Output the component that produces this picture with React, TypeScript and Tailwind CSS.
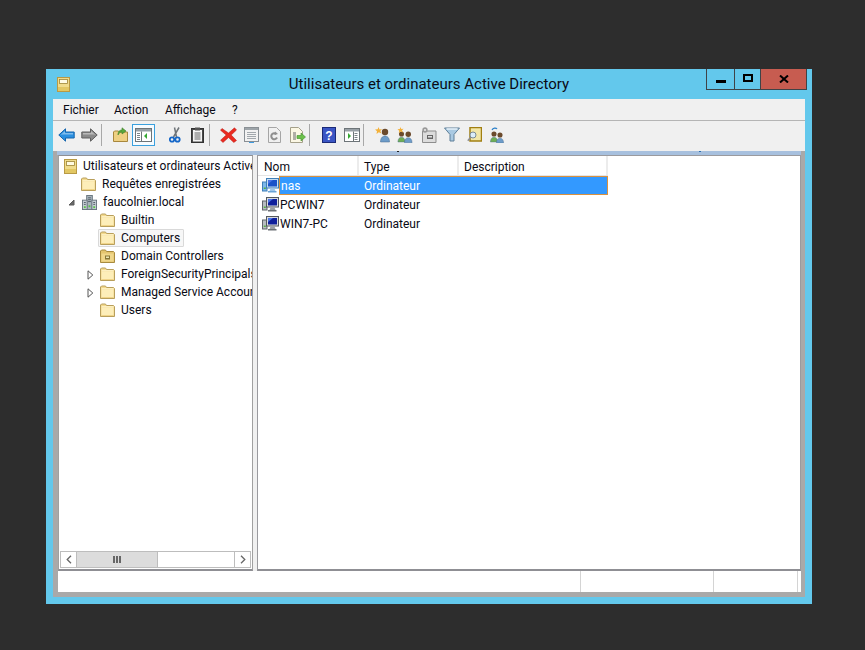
import type { ReactNode } from 'react';

const FONT = { fontFamily: 'Roboto, "Noto Sans", sans-serif' };

function Folder({ className = '' }: { className?: string }) {
  return (
    <svg width="15" height="14" viewBox="0 0 15 14" className={className}>
      <path d="M.5 13.500V2l1-1h4l1 1.500h7l1 1v10z" fill="#f3d98c" stroke="#b89f5c" />
      <rect x="1.500" y="4.500" width="12" height="8" fill="#fdeeb9" />
      <path d="M1.500 3.800h12" stroke="#fff8d8" />
      <path d="M1.500 12.500h12" stroke="#f0d488" />
    </svg>
  );
}

function SnapIn({ className = '' }: { className?: string }) {
  return (
    <svg width="13" height="15" viewBox="0 0 13 15" className={className}>
      <rect x="0" y="0" width="13" height="15" fill="#b89a45" />
      <rect x="1" y="1" width="11" height="13" fill="#f0dc8c" />
      <rect x="1" y="10" width="11" height="4" fill="#e2c763" />
      <rect x="2.500" y="2.500" width="8" height="4" fill="#fffbe3" stroke="#9d8436" strokeWidth="0.8" />
    </svg>
  );
}

function Domain() {
  return (
    <svg width="15" height="15" viewBox="0 0 16 16">
      <rect x="5" y="0.500" width="6" height="15" fill="#a9b5bd" stroke="#66737c" />
      <rect x="0.500" y="5.500" width="5" height="10" fill="#c4ced4" stroke="#66737c" />
      <rect x="10.500" y="5.500" width="5" height="10" fill="#c4ced4" stroke="#66737c" />
      <path d="M6.500 3h3M6.500 5h3M6.500 7h3M2 8h2M12 8h2M2 10h2M12 10h2" stroke="#4f5b63" />
      <rect x="2" y="12" width="2" height="2" fill="#58c247" />
      <rect x="12" y="12" width="2" height="2" fill="#58c247" />
      <rect x="7" y="11" width="2" height="2" fill="#58c247" />
    </svg>
  );
}

function OuFolder() {
  return (
    <svg width="15" height="14" viewBox="0 0 15 14">
      <path d="M.5 13.500V2l1-1h4l1 1.500h7l1 1v10z" fill="#e4c56f" stroke="#a88b3f" />
      <rect x="1.500" y="4.500" width="12" height="8" fill="#f0d78b" />
      <rect x="5" y="6.500" width="5" height="4" fill="#877636" />
      <rect x="6" y="7.500" width="3" height="1.500" fill="#ece6b4" />
    </svg>
  );
}

function Computer({ selected = false }: { selected?: boolean }) {
  return (
    <svg width="17" height="15" viewBox="0 0 17 15" className="shrink-0">
      <rect x="0.500" y="4" width="4.500" height="9" fill={selected ? '#7db8ea' : '#b7bcc0'} stroke={selected ? '#3f7fb8' : '#5f6469'} />
      <rect x="1.800" y="9.500" width="2" height="1.500" fill="#55b046" />
      <rect x="4.500" y="0.500" width="12" height="9.500" fill={selected ? '#c5ddf3' : '#d9dcdf'} stroke={selected ? '#3f7fb8' : '#55595e'} />
      <rect x="6" y="2" width="9" height="6.500" fill={selected ? '#1a52c8' : '#10209c'} />
      <path d="M6 2h5l-5 4z" fill="#4a74e6" />
      <path d="M8.500 10.500h4l1 2.500h-6z" fill={selected ? '#9fc6ea' : '#9ba0a5'} />
      <rect x="6" y="13" width="8.500" height="1.500" fill={selected ? '#6aa3d6' : '#6c7176'} />
    </svg>
  );
}

function TreeRow({
  indent,
  icon,
  label,
  arrow,
  active,
}: {
  indent: string;
  icon: ReactNode;
  label: string;
  arrow?: 'open' | 'closed';
  active?: boolean;
}) {
  return (
    <div className={`relative flex h-[18px] items-center whitespace-nowrap ${indent}`}>
      {arrow === 'open' && (
        <svg width="7" height="7" viewBox="0 0 7 7" className="absolute left-[9px]">
          <path d="M6 1v5H1z" fill="#6a6a6a" stroke="#5a5a5a" />
        </svg>
      )}
      {arrow === 'closed' && (
        <svg width="7" height="10" viewBox="0 0 7 10" className="absolute left-[28px] top-[5px]">
          <path d="M1 .8 5.800 5 1 9.200z" fill="#fff" stroke="#555" />
        </svg>
      )}
      <span
        className={`flex h-[18px] items-center rounded-[1px] border pl-[1px] pr-[3px] ${
          active ? 'border-[#d9d9d9] bg-[#f7f7f7]' : 'border-transparent'
        }`}
      >
        {icon}
        <span className="ml-[6px]">{label}</span>
      </span>
    </div>
  );
}

function ListRow({ name, selected }: { name: string; selected?: boolean }) {
  return (
    <div className="flex h-[19px] w-[350px] items-center pl-[4px]">
      <Computer selected={selected} />
      <div
        className={`flex h-[19px] flex-1 items-center ${
          selected ? 'border border-[#d9913f] bg-[#3399ff] text-white' : ''
        }`}
      >
        <span className={selected ? 'ml-[1px] w-[83px]' : 'ml-[1px] w-[84px]'}>{name}</span>
        <span>Ordinateur</span>
      </div>
    </div>
  );
}

function Btn({ children, active }: { children: ReactNode; active?: boolean }) {
  return (
    <div
      className={`flex h-[22px] w-[23px] items-center justify-center ${
        active ? 'border border-[#3aa0de] bg-[#f6fbff]' : ''
      }`}
    >
      {children}
    </div>
  );
}

function Sep() {
  return <div className="mr-[7px] h-[22px] w-[1px] bg-[#a8a8a8]" />;
}

function Arrow({ color, edge, flip }: { color: string; edge: string; flip?: boolean }) {
  return (
    <svg width="17" height="14" viewBox="0 0 17 14" className={flip ? '-scale-x-100' : ''}>
      <path d="M.8 7 7.500.8V4h8.700v6H7.500v3.200z" fill={color} stroke={edge} strokeLinejoin="round" />
      <path d="M2.500 7 7 3v2h8v1.500H4z" fill="#ffffff" opacity="0.4" />
    </svg>
  );
}

function Person({ tone = '#6d9cc9' }: { tone?: string }) {
  return (
    <g>
      <circle cx="5" cy="5" r="3.200" fill="#6b4a2c" />
      <path d="M.5 15c0-4 2-6 4.500-6s4.500 2 4.500 6z" fill={tone} stroke="#45678a" strokeWidth="0.5" />
    </g>
  );
}

function Toolbar() {
  return (
    <div className="flex h-[30px] items-center bg-[#f0f0f0] pb-[3px] pl-[2px]">
      <Btn><Arrow color="#2a8fe0" edge="#1565ad" /></Btn>
      <Btn><Arrow color="#8a8a8a" edge="#5f5f5f" flip /></Btn>
      <Sep />
      <Btn>
        <svg width="15" height="15" viewBox="0 0 15 15">
          <path d="M.5 14.500V5l1-1h4l1 1h8v9.500z" fill="#eed083" stroke="#a8873d" />
          <path d="M5 8c0-4 2-5 4-5V.8L13 4 9 7V5C7 5 6 6 5 8z" fill="#58a83c" stroke="#3d7f28" strokeWidth="0.6" />
        </svg>
      </Btn>
      <Btn active>
        <svg width="17" height="14" viewBox="0 0 17 14">
          <rect x="0.500" y="0.500" width="16" height="13" fill="#fff" stroke="#6d7478" />
          <rect x="1" y="1" width="15" height="2.500" fill="#98a0a6" />
          <path d="M2 5.500h3M2 7.500h3M2 9.500h3M2 11.500h3" stroke="#7c8388" />
          <path d="M6.500 3.500v10" stroke="#6d7478" />
          <path d="M12 5v6L9 8z" fill="#35a832" />
        </svg>
      </Btn>
      <div className="w-[8px]" />
      <Btn>
        <svg width="12" height="16" viewBox="0 0 12 16">
          <path d="M10 .5 4.500 10M5.500 .5 7.500 10" stroke="#6f757a" strokeWidth="1.500" fill="none" />
          <circle cx="3" cy="12.500" r="2.200" fill="none" stroke="#1466c8" strokeWidth="1.800" />
          <circle cx="8.500" cy="12.500" r="2.200" fill="none" stroke="#1466c8" strokeWidth="1.800" />
        </svg>
      </Btn>
      <Btn>
        <svg width="13" height="16" viewBox="0 0 13 16">
          <rect x="0.500" y="1.500" width="12" height="14" fill="#4a4a4a" stroke="#333" />
          <rect x="2" y="3" width="9" height="11.500" fill="#f4f4f4" />
          <rect x="4" y="0.500" width="5" height="3" fill="#555" />
          <path d="M3.500 6h6M3.500 8h6M3.500 10h6M3.500 12h6" stroke="#666" />
        </svg>
      </Btn>
      <Sep />
      <Btn>
        <svg width="17" height="16" viewBox="0 0 17 16">
          <path d="M2 1.500 8.500 6 14.500 .8 16.500 3 11.200 8l5.300 5.500-2.700 2-5.300-5-5.500 5L.6 13.200 6.200 8 .5 3.200z" fill="#ea2a20" stroke="#b51a14" strokeWidth="0.5" />
        </svg>
      </Btn>
      <Btn>
        <svg width="15" height="16" viewBox="0 0 15 16">
          <rect x="0.500" y="0.500" width="14" height="14" fill="#f2f2f2" stroke="#8a9095" />
          <rect x="1" y="1" width="13" height="2" fill="#9ea5aa" />
          <path d="M3 5.500h9M3 7.500h9M3 9.500h9M3 11.500h9" stroke="#a2a8ad" />
          <path d="M5 15.500h5" stroke="#3f9be0" />
        </svg>
      </Btn>
      <Btn>
        <svg width="13" height="16" viewBox="0 0 13 16">
          <path d="M.5.5h8l4 4v11H.5z" fill="#f0f0f0" stroke="#a5a5a5" />
          <path d="M9 10.500A3 3 0 1 1 8.300 7" fill="none" stroke="#8f8f8f" strokeWidth="2" />
          <path d="M7 4.500l3 2.500-3.500 1z" fill="#8f8f8f" />
        </svg>
      </Btn>
      <Btn>
        <svg width="16" height="16" viewBox="0 0 16 16">
          <path d="M.5.5h8l4 4v11H.5z" fill="#fbf7e4" stroke="#a5a08a" />
          <path d="M3 6h3M3 8h3M3 10h3M3 12h3" stroke="#666" />
          <path d="M7 8.500h4V6l4.500 4-4.500 4v-2.500H7z" fill="#6cc04a" stroke="#3f8f2a" strokeWidth="0.6" />
        </svg>
      </Btn>
      <Sep />
      <Btn>
        <svg width="14" height="16" viewBox="0 0 14 16">
          <rect x="0.500" y="0.500" width="13" height="15" fill="#3a55c4" stroke="#1b2a78" />
          <text x="7" y="12.500" textAnchor="middle" fontSize="12" fontWeight="700" fill="#fff" fontFamily="Liberation Sans, sans-serif">?</text>
        </svg>
      </Btn>
      <Btn>
        <svg width="16" height="14" viewBox="0 0 16 14">
          <rect x="0.500" y="0.500" width="15" height="13" fill="#fff" stroke="#6d7478" />
          <rect x="1" y="1" width="14" height="2.500" fill="#98a0a6" />
          <path d="M10.500 5.500h3M10.500 7.500h3M10.500 9.500h3M10.500 11.500h3" stroke="#7c8388" />
          <path d="M9.500 3.500v10" stroke="#6d7478" />
          <path d="M4 5v6l3-3z" fill="#35a832" />
        </svg>
      </Btn>
      <Sep />
      <Btn>
        <svg width="16" height="16" viewBox="0 0 16 16">
          <g transform="translate(5 0)"><Person /></g>
          <path d="M3.500 0 4.500 2.500 7 2 5.300 4 6.500 6.500 3.800 5.300 1.500 7 2 4.300 0 2.500 2.700 2.300z" fill="#f3b13a" />
        </svg>
      </Btn>
      <Btn>
        <svg width="17" height="16" viewBox="0 0 17 16">
          <g transform="translate(.5 3) scale(0.8)"><Person tone="#6fae55" /></g>
          <g transform="translate(7 3) scale(0.85)"><Person /></g>
          <path d="M3.500 0 4.300 2 6.500 1.700 5 3.400 6 5.500 3.700 4.500 1.800 6 2.200 3.700.5 2.200 2.800 2z" fill="#f3b13a" />
        </svg>
      </Btn>
      <Btn>
        <svg width="16" height="16" viewBox="0 0 16 16">
          <path d="M1.500 15.500V4h13.500v11.500z" fill="#dcdcdc" stroke="#8d8d8d" />
          <rect x="6" y="8" width="6" height="4" fill="#666" />
          <rect x="7" y="9" width="4" height="1.500" fill="#ddd" />
          <circle cx="4" cy="3" r="2.700" fill="#9a9a9a" />
          <circle cx="4" cy="3" r="1" fill="#eee" />
        </svg>
      </Btn>
      <Btn>
        <svg width="16" height="15" viewBox="0 0 16 15">
          <path d="M.5 1h15L10 7.500v6.500H6V7.500z" fill="#a9c9e2" stroke="#5f7f98" />
          <path d="M2.500 2h11" stroke="#e7f1f9" strokeWidth="1.500" />
        </svg>
      </Btn>
      <Btn>
        <svg width="15" height="15" viewBox="0 0 15 15">
          <rect x="3" y="0.500" width="11.500" height="13.500" fill="#f3e7a8" stroke="#a17f12" strokeWidth="1.500" />
          <circle cx="6" cy="8" r="3" fill="#dceefa" stroke="#7b8a94" />
          <path d="M3.500 10.500 .8 13.800" stroke="#8d8d8d" strokeWidth="1.500" />
        </svg>
      </Btn>
      <Btn>
        <svg width="16" height="16" viewBox="0 0 16 16">
          <g transform="translate(0 3) scale(0.8)"><Person tone="#6fae55" /></g>
          <g transform="translate(6 4) scale(0.8)"><Person /></g>
          <path d="M2 3C3 .8 6 .5 7 2" fill="none" stroke="#2a7fc9" strokeWidth="1.200" />
        </svg>
      </Btn>
    </div>
  );
}

function ScrollBar() {
  return (
    <div className="mx-[1px] mb-[1px] flex h-[17px] border border-[#bdbdbd] bg-white">
      <div className="flex w-[16px] items-center justify-center border-r border-[#bdbdbd]">
        <svg width="6" height="9" viewBox="0 0 6 9">
          <path d="M5 .7 1.200 4.500 5 8.300" fill="none" stroke="#666" strokeWidth="1.300" />
        </svg>
      </div>
      <div className="flex w-[81px] items-center justify-center gap-[1px] border-r border-[#bdbdbd] bg-[#dcdcdc]">
        <span className="h-[7px] w-[2px] bg-[#666]" />
        <span className="h-[7px] w-[2px] bg-[#666]" />
        <span className="h-[7px] w-[2px] bg-[#666]" />
      </div>
      <div className="flex-1" />
      <div className="flex w-[16px] items-center justify-center border-l border-[#bdbdbd]">
        <svg width="6" height="9" viewBox="0 0 6 9">
          <path d="M1 .7 4.800 4.500 1 8.300" fill="none" stroke="#666" strokeWidth="1.300" />
        </svg>
      </div>
    </div>
  );
}

export default function App() {
  return (
    <div className="h-[650px] w-[865px] overflow-hidden bg-[#2d2d2d] pl-[46px] pt-[69px] text-[12px] text-[#0a0a14]" style={FONT}>
      <div className="flex h-[535px] w-[766px] flex-col bg-[#63c8ec] px-[7px] pb-[7px]">
        {/* Title bar */}
        <div className="relative -mx-[7px] flex h-[30px] shrink-0 items-center justify-center text-[15px]">
          <div className="absolute left-[11px] top-[8px]">
            <SnapIn />
          </div>
          <span>Utilisateurs et ordinateurs Active Directory</span>
          <div className="absolute right-[5px] top-0 flex h-[21px] border-x border-b border-[#3f4347]">
            <div className="flex w-[28px] items-center justify-center border-r border-[#3f4347]">
              <span className="mt-[4px] h-[3px] w-[10px] bg-black" />
            </div>
            <div className="flex w-[26px] items-center justify-center border-r border-[#3f4347]">
              <span className="mb-[2px] h-[8px] w-[10px] border-2 border-black" />
            </div>
            <div className="flex w-[45px] items-center justify-center bg-[#c75c50]">
              <svg width="10" height="8" viewBox="0 0 10 8">
                <path d="M1 .5 9 7.500M9 .5 1 7.500" stroke="#000" strokeWidth="2" />
              </svg>
            </div>
          </div>
        </div>

        {/* Menu */}
        <div className="flex h-[22px] shrink-0 items-center border-b border-[#b5b5b5] bg-[#f0f0f0] pl-[10px]">
          <span className="w-[51px]">Fichier</span>
          <span className="w-[51px]">Action</span>
          <span className="w-[67px]">Affichage</span>
          <span>?</span>
        </div>

        <Toolbar />

        {/* Separator strip */}
        <div className="relative flex h-[4px] shrink-0">
          <div className="w-[4px] bg-[#a9a9a9]" />
          <div className="flex-1 bg-[#a7c0de]" />
          <div className="w-[4px] bg-[#a9a9a9]" />
          <span className="absolute left-[344px] top-0 h-[1px] w-[2px] bg-[#222]" />
          <span className="absolute left-[646px] top-0 h-[1px] w-[2px] bg-[#2a6fb0]" />
        </div>

        <div className="flex min-h-0 flex-1 flex-col bg-[#a9a9a9] pb-[5px] pl-[5px] pr-[4px]">
          {/* Panes */}
          <div className="flex min-h-0 flex-1 bg-white">
            <div className="flex w-[195px] flex-col border-b-2 border-l border-r border-t border-b-[#8f8f94] border-l-[#a0a0a0] border-r-[#a0a0a0] border-t-[#8f8f94]">
              <div className="min-h-0 flex-1 overflow-hidden pt-[1px]">
                <TreeRow indent="pl-[3px]" icon={<SnapIn />} label="Utilisateurs et ordinateurs Active" />
                <TreeRow indent="pl-[20px]" icon={<Folder />} label="Requêtes enregistrées" />
                <TreeRow indent="pl-[21px]" arrow="open" icon={<Domain />} label="faucolnier.local" />
                <TreeRow indent="pl-[39px]" icon={<Folder />} label="Builtin" />
                <TreeRow indent="pl-[39px]" active icon={<Folder />} label="Computers" />
                <TreeRow indent="pl-[39px]" icon={<OuFolder />} label="Domain Controllers" />
                <TreeRow indent="pl-[39px]" arrow="closed" icon={<Folder />} label="ForeignSecurityPrincipals" />
                <TreeRow indent="pl-[39px]" arrow="closed" icon={<Folder />} label="Managed Service Accounts" />
                <TreeRow indent="pl-[39px]" icon={<Folder />} label="Users" />
              </div>
              <ScrollBar />
            </div>
            <div className="w-[4px] bg-[#f0f0f0]" />
            <div className="flex min-w-0 flex-1 flex-col border-b-2 border-l border-r border-t border-[#9a9a9e] border-b-[#8f8f94]">
              <div className="flex h-[20px] shrink-0 items-center">
                <div className="flex h-[20px] w-[350px] border-b border-[#e5e5e5]">
                  <div className="w-[101px] border-r-2 border-[#ececec] pl-[6px] leading-[23px]">Nom</div>
                  <div className="w-[100px] border-r-2 border-[#ececec] pl-[5px] leading-[23px]">Type</div>
                  <div className="w-[149px] border-r-2 border-[#ececec] pl-[5px] leading-[23px]">Description</div>
                </div>
              </div>
              <div>
                <ListRow name="nas" selected />
                <ListRow name="PCWIN7" />
                <ListRow name="WIN7-PC" />
              </div>
            </div>
          </div>

          {/* Status bar */}
          <div className="flex h-[21px] shrink-0 bg-white">
            <div className="w-[522px]" />
            <div className="w-[133px] border-l border-[#d4d4d4]" />
            <div className="w-[85px] border-x border-[#d4d4d4]" />
          </div>
        </div>
      </div>
    </div>
  );
}
